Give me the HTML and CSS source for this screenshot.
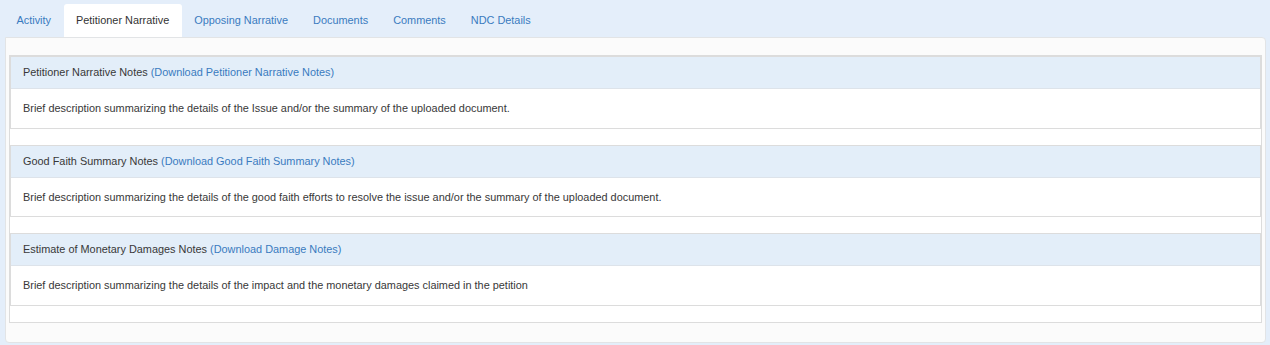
FILE: index.html
```html
<!DOCTYPE html>
<html>
<head>
<meta charset="utf-8">
<link rel="stylesheet" href="styles.css">
</head>
<body>
<div class="page">
  <ul class="tabs">
    <li class="tab"><a href="#">Activity</a></li>
    <li class="tab active"><a href="#">Petitioner Narrative</a></li>
    <li class="tab"><a href="#">Opposing Narrative</a></li>
    <li class="tab"><a href="#">Documents</a></li>
    <li class="tab"><a href="#">Comments</a></li>
    <li class="tab"><a href="#">NDC Details</a></li>
  </ul>
  <div class="tab-content">
    <div class="panel-group">
      <div class="panel">
        <div class="panel-heading">Petitioner Narrative Notes <a href="#">(Download Petitioner Narrative Notes)</a></div>
        <div class="panel-body">Brief description summarizing the details of the Issue and/or the summary of the uploaded document.</div>
      </div>
      <div class="panel">
        <div class="panel-heading">Good Faith Summary Notes <a href="#">(Download Good Faith Summary Notes)</a></div>
        <div class="panel-body">Brief description summarizing the details of the good faith efforts to resolve the issue and/or the summary of the uploaded document.</div>
      </div>
      <div class="panel">
        <div class="panel-heading">Estimate of Monetary Damages Notes <a href="#">(Download Damage Notes)</a></div>
        <div class="panel-body">Brief description summarizing the details of the impact and the monetary damages claimed in the petition</div>
      </div>
    </div>
  </div>
</div>
</body>
</html>
```
FILE: styles.css
```css
html, body {
  margin: 0;
  padding: 0;
  background: #e4eefa;
  font-family: "Liberation Sans", Arial, sans-serif;
  font-size: 10.9px;
  line-height: 15px;
  color: #383838;
}
a {
  color: #3a7bbf;
  text-decoration: none;
}
.page {
  width: 1270px;
  height: 345px;
}
.tabs {
  list-style: none;
  margin: 0;
  padding: 4px 0 0 4px;
  display: flex;
  height: 33px;
}
.tab a {
  display: block;
  padding: 0 12.5px;
  height: 33px;
  line-height: 33px;
  border-radius: 3px 3px 0 0;
}
.tab.active a {
  background: #fff;
  color: #333;
}
.tab-content {
  margin: 0 4px 0 5px;
  background: #fbfbfb;
  border: 1px solid #e2e4e6;
  border-radius: 0 4px 4px 4px;
  padding: 17px 3px 19px;
}
.panel-group {
  background: #fff;
  border: 1px solid #dcdcdc;
  padding: 0 0 16px;
}
.panel {
  border: 1px solid #dcdcdc;
  margin-bottom: 16px;
  background: #fff;
}
.panel:last-child {
  margin-bottom: 0;
}
.panel-heading {
  background: #e3eef9;
  padding: 8px 12px;
  border-bottom: 1px solid #dde3ea;
}
.panel-body {
  padding: 12px 12px 11.5px;
  height: 15px;
}
```
